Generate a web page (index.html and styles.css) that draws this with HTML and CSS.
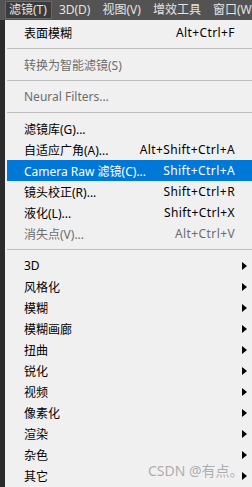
FILE: index.html
```html
<!DOCTYPE html>
<html lang="zh">
  <head>
    <meta charset="UTF-8" />
    <meta name="viewport" content="width=device-width, initial-scale=1.0" />
    <title>滤镜菜单</title>
    <link rel="stylesheet" href="styles.css">
  </head>
  <body>
    <header class="menubar">
      <span class="bar_item aktiv">滤镜(T)</span>
      <span class="bar_item">3D(D)</span>
      <span class="bar_item">视图(V)</span>
      <span class="bar_item">增效工具</span>
      <span class="bar_item">窗口(W)</span>
    </header>

    <main class="ramme">
      <section class="menu">
        <div class="punkt"><span>表面模糊</span><span class="genvej">Alt+Ctrl+F</span></div>
        <hr />
        <div class="punkt slukket"><span>转换为智能滤镜(S)</span></div>
        <hr />
        <div class="punkt slukket"><span>Neural Filters...</span></div>
        <hr />
        <div class="punkt"><span>滤镜库(G)...</span></div>
        <div class="punkt"><span>自适应广角(A)...</span><span class="genvej">Alt+Shift+Ctrl+A</span></div>
        <div class="punkt valgt"><span>Camera Raw 滤镜(C)...</span><span class="genvej">Shift+Ctrl+A</span></div>
        <div class="punkt"><span>镜头校正(R)...</span><span class="genvej">Shift+Ctrl+R</span></div>
        <div class="punkt"><span>液化(L)...</span><span class="genvej">Shift+Ctrl+X</span></div>
        <div class="punkt slukket"><span>消失点(V)...</span><span class="genvej">Alt+Ctrl+V</span></div>
        <hr />
        <div class="punkt"><span>3D</span><i class="pil"></i></div>
        <div class="punkt"><span>风格化</span><i class="pil"></i></div>
        <div class="punkt"><span>模糊</span><i class="pil"></i></div>
        <div class="punkt"><span>模糊画廊</span><i class="pil"></i></div>
        <div class="punkt"><span>扭曲</span><i class="pil"></i></div>
        <div class="punkt"><span>锐化</span><i class="pil"></i></div>
        <div class="punkt"><span>视频</span><i class="pil"></i></div>
        <div class="punkt"><span>像素化</span><i class="pil"></i></div>
        <div class="punkt"><span>渲染</span><i class="pil"></i></div>
        <div class="punkt"><span>杂色</span><i class="pil"></i></div>
        <div class="punkt"><span>其它</span><i class="pil"></i></div>

        <div class="vandmaerke">CSDN @有点。</div>
      </section>
    </main>
  </body>
</html>
```

FILE: styles.css
```css
body {
  margin: 0;
  padding: 0;
  width: 252px;
  height: 487px;
  overflow: hidden;
  font-family: "Noto Sans", "Noto Sans CJK SC", sans-serif;
  font-size: 12px;
}

.menubar {
  display: flex;
  height: 20px;
  align-items: center;
  background-color: #535353;
  padding-left: 5px;
  white-space: nowrap;
  overflow: hidden;
}

.bar_item {
  color: #e4e4e4;
  padding: 0 7px 0 3px;
  line-height: 16px;
  border: 1px solid transparent;
}

.aktiv {
  background-color: #3b3b3b;
  border-color: #686868;
  padding-right: 4px;
  margin-right: 3px;
}

.ramme {
  background-color: #2b2b2b;
  padding-left: 5px;
  height: 467px;
}

.menu {
  position: relative;
  background-color: #f0f0f0;
  padding: 2px 0 0 2px;
  height: 465px;
}

.punkt {
  display: grid;
  grid-template-columns: 1fr auto 17px;
  align-items: center;
  height: 21px;
  padding-left: 17px;
  color: #000;
  white-space: nowrap;
}

.genvej {
  grid-column: 2;
  letter-spacing: 0.4px;
}

.pil {
  grid-column: 3;
  justify-self: start;
  margin-left: 7px;
  width: 0;
  height: 0;
  border-left: 5px solid #000;
  border-top: 4px solid transparent;
  border-bottom: 4px solid transparent;
}

.slukket {
  color: #6d6d6d;
}

.valgt {
  background-color: #0078d7;
  color: #fff;
}

hr {
  border: none;
  border-top: 1px solid #bdbdbd;
  margin: 5px 0 5px 0;
  height: 0;
}

.vandmaerke {
  position: absolute;
  left: 143px;
  top: 440px;
  font-size: 14px;
  color: rgba(150, 150, 150, 0.75);
  white-space: nowrap;
}
```
